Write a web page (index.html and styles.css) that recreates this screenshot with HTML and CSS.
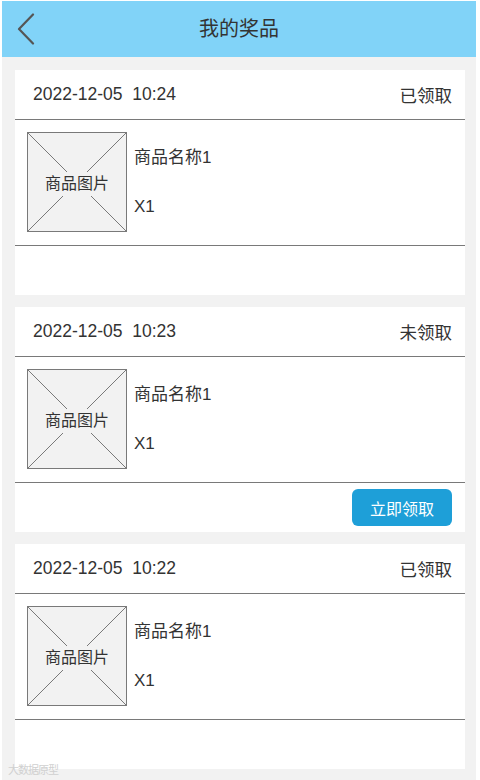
FILE: index.html
```html
<!DOCTYPE html>
<html lang="zh">
<head>
<meta charset="utf-8">
<title>我的奖品</title>
<link rel="stylesheet" href="styles.css">
</head>
<body>
<div class="frame">
  <header class="topbar">
    <svg class="back" width="20" height="32" viewBox="0 0 20 32"><path d="M17 1.5 L3 16 L17 30.5" fill="none" stroke="#555" stroke-width="2.2" stroke-linecap="round" stroke-linejoin="round"/></svg>
    <h1 class="title">我的奖品</h1>
  </header>
  <main class="list">
    <section class="card">
      <div class="card-head"><span class="date">2022-12-05&nbsp;&nbsp;10:24</span><span class="status">已领取</span></div>
      <div class="card-body">
        <div class="pic"><svg class="cross" viewBox="0 0 98 98" preserveAspectRatio="none"><path d="M0 0 L98 98 M98 0 L0 98" stroke="#797979" stroke-width="1"/></svg><span class="pic-text">商品图片</span></div>
        <div class="info"><span class="name">商品名称1</span><span class="qty">X1</span></div>
      </div>
      <div class="card-foot"></div>
    </section>
    <section class="card">
      <div class="card-head"><span class="date">2022-12-05&nbsp;&nbsp;10:23</span><span class="status">未领取</span></div>
      <div class="card-body">
        <div class="pic"><svg class="cross" viewBox="0 0 98 98" preserveAspectRatio="none"><path d="M0 0 L98 98 M98 0 L0 98" stroke="#797979" stroke-width="1"/></svg><span class="pic-text">商品图片</span></div>
        <div class="info"><span class="name">商品名称1</span><span class="qty">X1</span></div>
      </div>
      <div class="card-foot"><button class="claim">立即领取</button></div>
    </section>
    <section class="card">
      <div class="card-head"><span class="date">2022-12-05&nbsp;&nbsp;10:22</span><span class="status">已领取</span></div>
      <div class="card-body">
        <div class="pic"><svg class="cross" viewBox="0 0 98 98" preserveAspectRatio="none"><path d="M0 0 L98 98 M98 0 L0 98" stroke="#797979" stroke-width="1"/></svg><span class="pic-text">商品图片</span></div>
        <div class="info"><span class="name">商品名称1</span><span class="qty">X1</span></div>
      </div>
      <div class="card-foot"></div>
    </section>
  </main>
  <div class="watermark">大数据原型</div>
</div>
</body>
</html>
```
FILE: styles.css
```css
* { box-sizing: border-box; }
html, body { margin: 0; padding: 0; background: #ffffff; }
body {
  font-family: "Liberation Sans", "Noto Sans CJK SC", sans-serif;
  color: #333333;
}
.frame {
  position: relative;
  margin: 1px 0 0 2px;
  width: 474px;
  height: 779px;
  background: #f2f2f2;
  overflow: hidden;
}
.topbar {
  height: 56px;
  background: #81d3f8;
  display: flex;
  align-items: center;
  position: relative;
}
.back {
  position: absolute;
  left: 14px;
  top: 12px;
}
.title {
  margin: 0;
  width: 100%;
  text-align: center;
  font-size: 20px;
  font-weight: normal;
  color: #333;
  line-height: 56px;
}
.list {
  display: flex;
  flex-direction: column;
  gap: 12px;
  padding: 13px 11px 0 13px;
}
.card {
  background: #ffffff;
  height: 225px;
  display: flex;
  flex-direction: column;
}
.card-head {
  height: 50px;
  border-bottom: 1px solid #797979;
  display: flex;
  align-items: center;
  justify-content: space-between;
  padding: 0 13px 0 18px;
  font-size: 17.5px;
}
.date { color: #333; }
.status { color: #333; }
.card-body {
  height: 126px;
  border-bottom: 1px solid #797979;
  display: flex;
  padding: 12px 12px 0 12px;
}
.pic {
  position: relative;
  width: 100px;
  height: 100px;
  border: 1px solid #797979;
  background: #f2f2f2;
  display: flex;
  align-items: center;
  justify-content: center;
  padding-top: 3px;
}
.cross {
  position: absolute;
  left: 0;
  top: 0;
  width: 98px;
  height: 98px;
}
.pic-text {
  position: relative;
  font-size: 16px;
  line-height: 20px;
  color: #333;
  background: #f2f2f2;
  padding: 2px 1px;
}
.info {
  display: flex;
  flex-direction: column;
  padding: 14px 0 0 7px;
  font-size: 17px;
  line-height: 24px;
}
.qty { margin-top: 25px; }
.card-foot {
  flex: 1;
  display: flex;
  align-items: center;
  justify-content: flex-end;
  padding: 0 13px;
}
.claim {
  width: 100px;
  height: 37px;
  border: none;
  border-radius: 6px;
  background: #1e9fd8;
  color: #ffffff;
  font-family: "Liberation Sans", "Noto Sans CJK SC", sans-serif;
  font-size: 16px;
  padding: 0;
}
.watermark {
  position: absolute;
  left: 6px;
  bottom: 3px;
  font-size: 11px;
  color: #d0d0d0;
  letter-spacing: -1px;
}
```
